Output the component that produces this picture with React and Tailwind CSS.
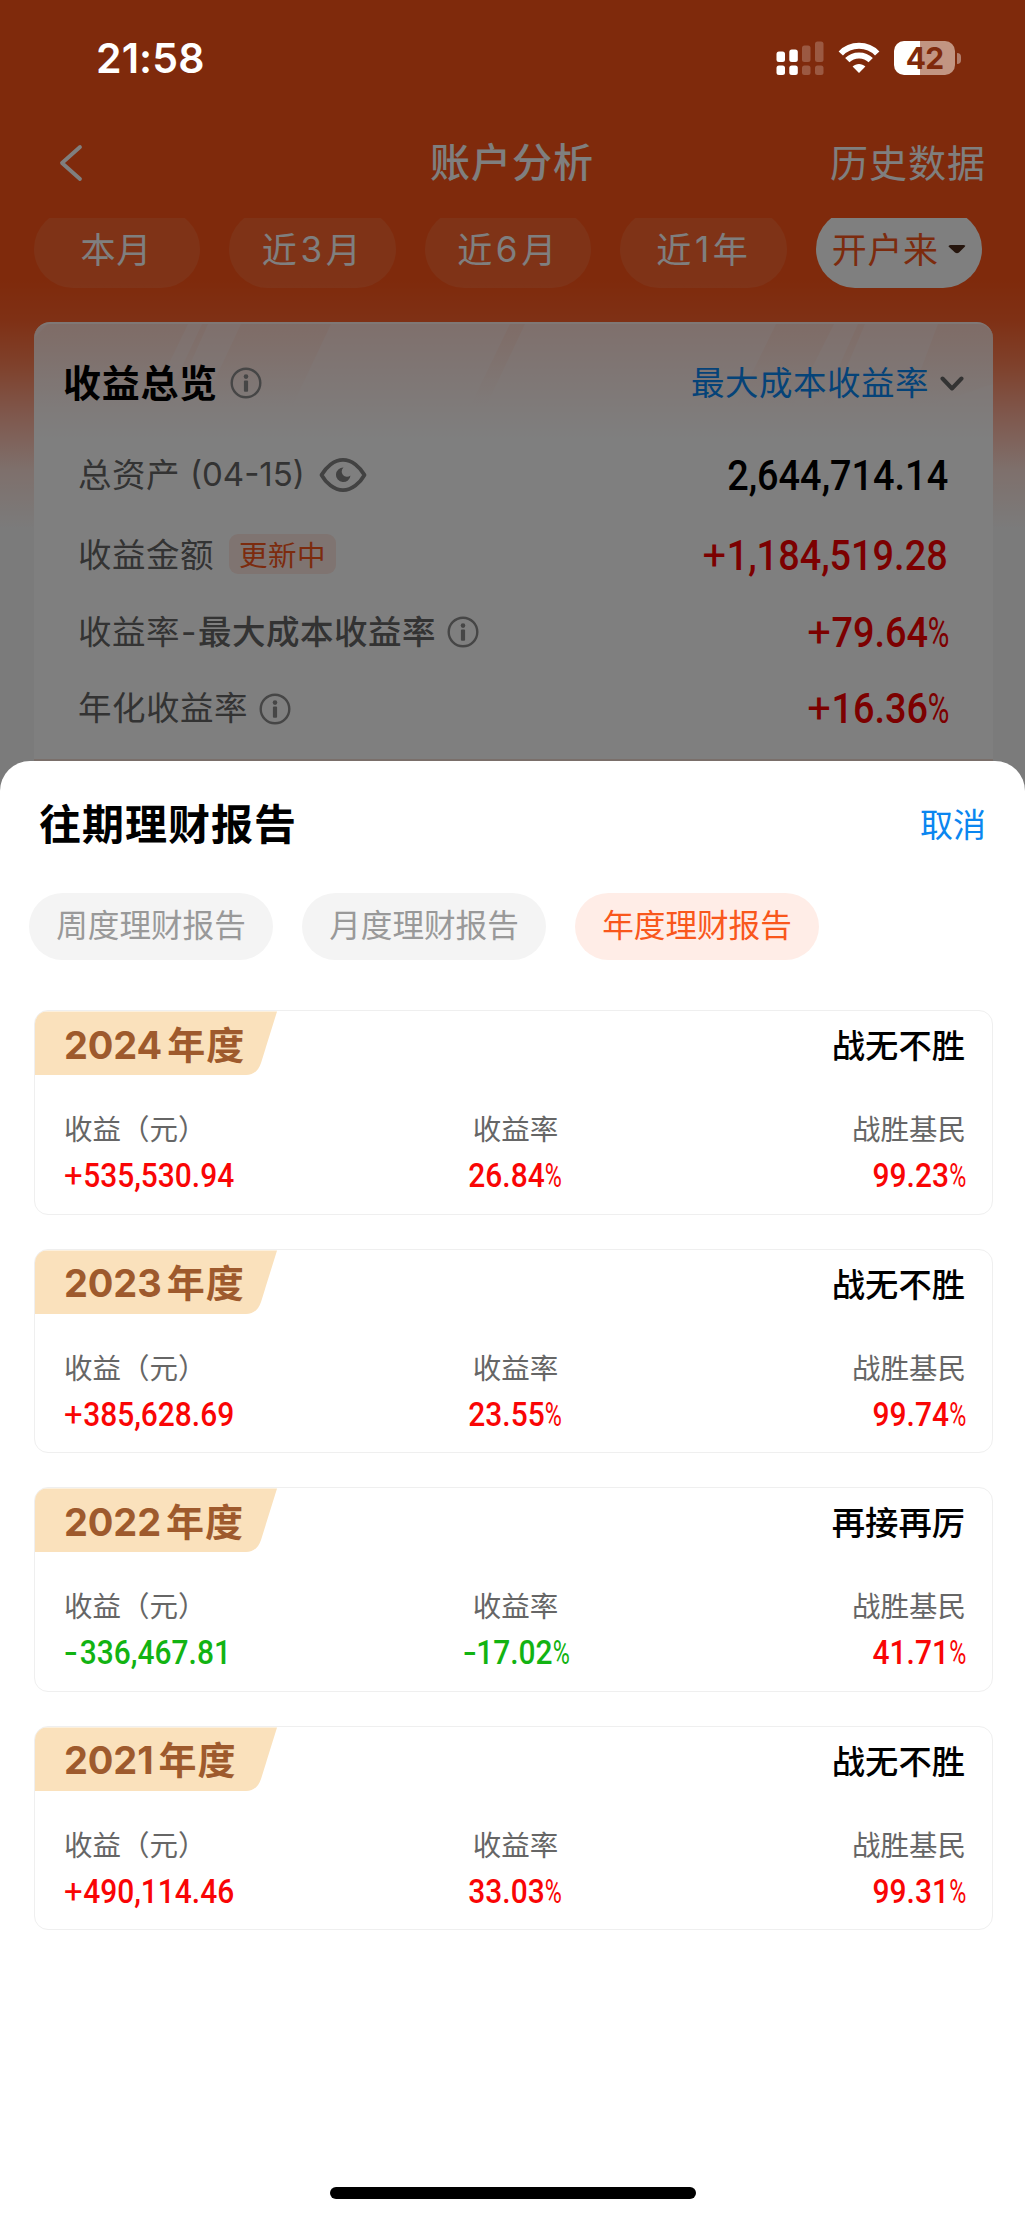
import React from 'react';

const periods = ['本月', '近3月', '近6月', '近1年'];

const overview = [
  { label: '总资产', date: '(04-15)', value: '2,644,714.14', color: 'text-black', height: 'h-[62px]', eye: true },
  { label: '收益金额', badge: '更新中', value: '+1,184,519.28', color: 'text-[#f80000]', height: 'h-[98px]' },
  { label: '收益率', strong: '最大成本收益率', value: '+79.64%', color: 'text-[#f80000]', height: 'h-[56px]', info: true },
  { label: '年化收益率', value: '+16.36%', color: 'text-[#f80000]', height: 'h-[97px]', info: true },
];

const reports = [
  { year: '2024', title: '战无不胜', profit: '+535,530.94', rate: '26.84%', beat: '99.23%' },
  { year: '2023', title: '战无不胜', profit: '+385,628.69', rate: '23.55%', beat: '99.74%' },
  { year: '2022', title: '再接再厉', profit: '-336,467.81', rate: '-17.02%', beat: '41.71%' },
  { year: '2021', title: '战无不胜', profit: '+490,114.46', rate: '33.03%', beat: '99.31%' },
];

const InfoIcon = () => (
  <svg width="32" height="32" viewBox="0 0 32 32" fill="none" className="text-[#8c8c8c]">
    <circle cx="16" cy="16" r="14.3" stroke="currentColor" strokeWidth="2.4" />
    <circle cx="16" cy="9.6" r="2.3" fill="currentColor" />
    <rect x="13.9" y="13.4" width="4.2" height="11.4" rx="1" fill="currentColor" />
  </svg>
);

const EyeIcon = () => (
  <svg width="48" height="36" viewBox="0 0 48 36" fill="none" className="text-[#848484]">
    <path
      d="M2.5 18C7 10 15 2.8 24 2.8S41 10 45.5 18C41 26 33 33.2 24 33.2S7 26 2.5 18Z"
      stroke="currentColor"
      strokeWidth="3.8"
      strokeLinejoin="round"
    />
    <path d="M24.5 10.5A7.3 7.3 0 1 0 31.5 18.5A5.2 5.2 0 0 1 24.5 10.5Z" fill="currentColor" />
  </svg>
);

// condensed figures, with a lighter sign and percent
const Num = ({ value, className }) => {
  const percent = value.endsWith('%');
  const digits = value.replace(/[+\-%]/g, '');
  return (
    <span className={`inline-block whitespace-nowrap font-['Roboto'] font-medium scale-x-[0.88] ${className}`}>
      {value[0] === '+' && <span className="inline-block w-[0.64em] origin-left scale-x-[1.1] font-normal">+</span>}
      {value[0] === '-' && (
        <span className="inline-block w-[0.53em]">
          <span className="inline-block origin-left scale-x-[1.35]">-</span>
        </span>
      )}
      {digits}
      {percent && <span className="inline-block w-[0.54em] origin-left scale-x-[0.78] font-normal">%</span>}
    </span>
  );
};

const StatusBar = () => (
  <div className="relative z-10 flex h-[116px] items-center justify-between pl-[96px] pr-[64px] text-white">
    <span className="pt-[2px] font-['Inter'] text-[41px] font-semibold tracking-[0.1px]">21:58</span>
    <div className="flex items-center">
      <svg width="48" height="34" viewBox="0 0 48 34" fill="currentColor">
        <rect x="0.5" y="10.5" width="8.5" height="10.5" rx="2.5" />
        <rect x="13.3" y="8.5" width="8.5" height="12.5" rx="2.5" />
        <rect x="0.5" y="24.5" width="8.5" height="9.5" rx="2.5" />
        <rect x="13.3" y="24.5" width="8.5" height="9.5" rx="2.5" />
        <g opacity="0.22">
          <rect x="26" y="4.5" width="8.5" height="16.5" rx="2.5" />
          <rect x="39" y="0.5" width="8.5" height="20.5" rx="2.5" />
          <rect x="26" y="24.5" width="8.5" height="9.5" rx="2.5" />
          <rect x="39" y="24.5" width="8.5" height="9.5" rx="2.5" />
        </g>
      </svg>
      <svg width="42" height="32" viewBox="0 0 42 32" fill="none" className="ml-[14px]">
        <path d="M2.8 11.5C12.5 1.2 29.5 1.2 39.2 11.5" stroke="currentColor" strokeWidth="6" />
        <path d="M9.3 18.2C15.5 11.8 26.5 11.8 32.7 18.2" stroke="currentColor" strokeWidth="6" />
        <path d="M21 31L14.6 24.5C18 21 24 21 27.4 24.5Z" fill="currentColor" />
      </svg>
      <div className="ml-[14px] flex h-[34px] w-[61px] items-center justify-center rounded-[10px] bg-[linear-gradient(90deg,#fff_43%,#c29582_43%)] font-['Inter'] text-[30px] font-bold tracking-[-0.8px] text-[#7f2a0c]">
        42
      </div>
      <div className="ml-[2px] h-[11px] w-[4px] rounded-r-full bg-[#b27f6d]"></div>
    </div>
  </div>
);

const ReportCard = ({ report }) => {
  const tone = report.profit.startsWith('-') ? 'text-[#12b312]' : 'text-[#f90505]';
  return (
    <div className="h-[204.6px] overflow-hidden rounded-[14px] border border-[#efefef]">
      <div className="flex h-[65px] items-center justify-between pr-[27px]">
        <div className="relative h-full w-[244px]">
          <svg width="244" height="65" viewBox="0 0 244 65" className="absolute left-0 top-0">
            <path d="M0 0.5H242L226 52Q222 64 211 64H0Z" fill="#fae1bc" />
          </svg>
          <div className="relative flex h-full items-center pl-[29px] pt-[3px] text-[38px] font-bold text-[#9e5a2d]">
            <span className="font-['Inter'] tracking-[-0.1px]">{report.year}</span>
            <span className="ml-[5px] pb-[6px] tracking-[1px]">年度</span>
          </div>
        </div>
        <span className="pt-[1px] text-[33.3px] font-medium text-black">{report.title}</span>
      </div>
      <div className="flex justify-between pl-[29px] pr-[27px] pt-[30px] text-[28.5px] leading-[44px] text-[#666]">
        <div className="w-[200px]">
          <div className="mb-[3px]">收益（元）</div>
          <Num value={report.profit} className={`origin-left text-[34px] ${tone}`} />
        </div>
        <div className="w-[200px] text-center">
          <div className="mb-[3px] pl-[2px]">收益率</div>
          <Num value={report.rate} className={`origin-center text-[34px] ${tone}`} />
        </div>
        <div className="w-[200px] text-right">
          <div className="-mr-px mb-[3px]">战胜基民</div>
          <Num value={report.beat} className="origin-right text-[34px] text-[#f90505]" />
        </div>
      </div>
    </div>
  );
};

const App = () => {
  return (
    <div className="relative flex h-[2218px] w-[1025px] flex-col overflow-hidden bg-[linear-gradient(180deg,#ff5518_280px,#ff612a_320px,#ff8257_365px,#ffb09a_415px,#fde0d8_470px,#f7f7f7_530px)] font-['Noto_Sans_CJK_SC',sans-serif]">
      <div className="absolute inset-0 z-[5] bg-black/50"></div>
      <StatusBar />

      <div className="grid h-[94px] grid-cols-3 items-center pl-[58px] pr-[39px] text-white">
        <svg width="26" height="38" viewBox="0 0 26 38" fill="none" stroke="currentColor" strokeWidth="3.8">
          <path d="M22 3L4 19L22 35" strokeLinecap="round" strokeLinejoin="round" />
        </svg>
        <span className="pb-[6px] pr-[20px] text-center text-[40px] font-medium tracking-[1px]">账户分析</span>
        <span className="pb-[5px] text-right text-[38px] tracking-[1px]">历史数据</span>
      </div>

      <div className="mt-[8px] flex h-[70px] items-end gap-[29px] overflow-hidden px-[34px] text-[35px] tracking-[0.6px] text-white">
        {periods.map((p) => (
          <div key={p} className="flex h-[78px] w-[166.4px] shrink-0 items-center justify-center rounded-full bg-white/10 pb-[2px] pr-[2px]">
            {p.length === 2 ? p : (
              <>
                {p[0]}
                <span className="mx-[3px] pt-[2px] font-['Inter']">{p[1]}</span>
                {p[2]}
              </>
            )}
          </div>
        ))}
        <div className="flex h-[78px] w-[166.4px] shrink-0 items-center justify-center rounded-full bg-white pb-[2px] text-[#f9571c]">
          开户来
          <svg width="18" height="9" viewBox="0 0 18 9" className="ml-[9px] mt-[2px]">
            <path d="M0.5 1.5Q0.5 0 2.5 0H15.5Q18 0 17 1.5L11 7.5Q9 9 7 7.5Z" fill="#4a2a1a" />
          </svg>
        </div>
      </div>

      <div className="relative mx-[34px] mt-[34px] w-[959px] rounded-t-[16px] border-b-2 border-t-2 border-b-[#f5dfd5] border-t-[#fff1ed] bg-[linear-gradient(180deg,#ffe0d9_0px,#fff_118px)] pb-[2px]">
        <svg width="959" height="120" viewBox="0 0 959 120" className="absolute left-0 top-0">
          <defs>
            <linearGradient id="fade" x1="0" y1="0" x2="0" y2="1">
              <stop offset="0" stopColor="#ffc9b5" stopOpacity="0.3" />
              <stop offset="0.8" stopColor="#ffc9b5" stopOpacity="0" />
            </linearGradient>
          </defs>
          <path d="M14 0H154L106 100H0V14ZM168 0H174L134 90H126ZM207 0H297L250 100H160ZM476 0H491L446 95H430ZM742 0H800L755 90H698ZM824 0H831L795 85H786ZM904 0H950L959 10V60L870 90Z" fill="url(#fade)" />
        </svg>
        <div className="relative flex h-[120px] items-center justify-between pl-[29px] pr-[29px]">
          <div className="flex items-center gap-[12px]">
            <span className="pb-[7px] text-[38px] font-bold tracking-[0.7px] text-black">收益总览</span>
            <span className="pb-[2px]"><InfoIcon /></span>
          </div>
          <div className="flex items-center gap-[11px]">
            <span className="pb-[5px] text-[33.5px] tracking-[0.5px] text-[#0b86f0]">最大成本收益率</span>
            <svg width="24" height="16" viewBox="0 0 24 16" fill="none">
              <path d="M2.5 2.5L12 12.5L21.5 2.5" stroke="#666" strokeWidth="4" strokeLinecap="round" strokeLinejoin="round" />
            </svg>
          </div>
        </div>
        {overview.map((row) => (
          <div key={row.label} className={`relative flex items-center justify-between pl-[44px] pr-[45px] ${row.height}`}>
            <div className="flex items-center text-[33.5px] tracking-[0.5px] text-[#666]">
              <span className="pb-[4px]">{row.label}</span>
              {row.date && <span className="ml-[10px] font-['Inter'] text-[33px] tracking-[0px]">{row.date}</span>}
              {row.eye && <span className="ml-[14px]"><EyeIcon /></span>}
              {row.badge && (
                <span className="mb-[2px] ml-[15px] rounded-[9px] bg-[#ffe9e2] px-[10px] text-[28.5px] leading-[40px] text-[#f9571c]">{row.badge}</span>
              )}
              {row.strong && (
                <>
                  <span className="px-[1px] font-['Inter']">-</span>
                  <span className="pb-[4px] font-medium">{row.strong}</span>
                </>
              )}
              {row.info && <span className="ml-[11px]"><InfoIcon /></span>}
            </div>
            <Num value={row.value} className={`origin-right text-[43px] ${row.color}`} />
          </div>
        ))}
      </div>

      <div className="relative z-10 flex flex-1 flex-col rounded-t-[30px] bg-white">
        <div className="flex h-[126px] items-center justify-between pl-[39px] pr-[39px]">
          <span className="pb-[6px] text-[42px] font-bold tracking-[1px] text-black">往期理财报告</span>
          <span className="text-[33px] text-[#0b86f0]">取消</span>
        </div>
        <div className="mt-[6px] flex gap-[29px] pl-[29px] text-[31.6px]">
          <button className="h-[67px] w-[244px] rounded-full bg-[#f4f4f4] pb-[5px] text-[#999]">周度理财报告</button>
          <button className="h-[67px] w-[244px] rounded-full bg-[#f4f4f4] pb-[5px] text-[#999]">月度理财报告</button>
          <button className="h-[67px] w-[244px] rounded-full bg-[#ffede7] pb-[5px] text-[#f9571c]">年度理财报告</button>
        </div>
        <div className="mt-[50px] flex flex-col gap-[34px] pl-[34px] pr-[32px]">
          {reports.map((r) => (
            <ReportCard key={r.year} report={r} />
          ))}
        </div>
        <div className="mx-auto mb-[19px] mt-auto h-[12px] w-[366px] rounded-full bg-black"></div>
      </div>
    </div>
  );
};

export default App;
